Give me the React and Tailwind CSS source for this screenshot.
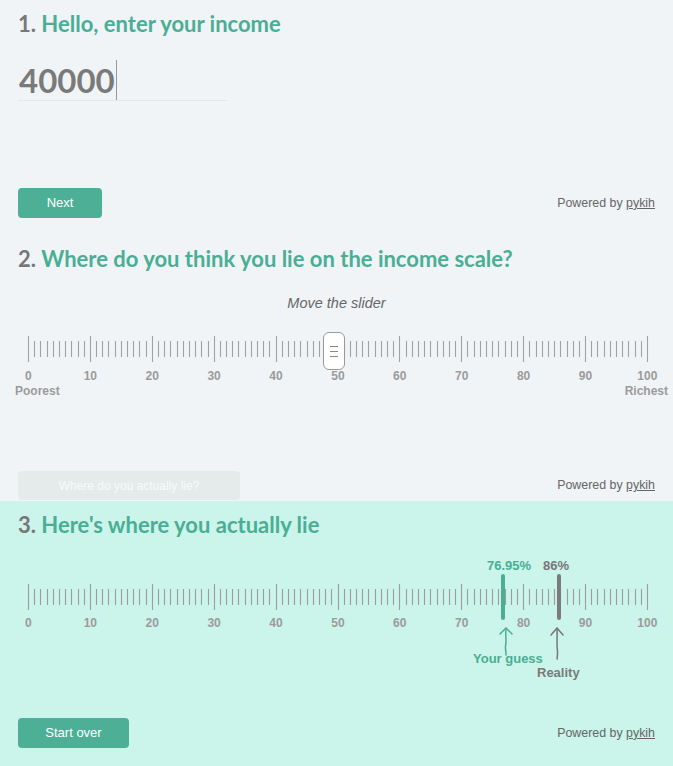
const STEP = 6.19;
const TICKS = Array.from({ length: 101 }, (_, i) => i);
const LABELS = Array.from({ length: 11 }, (_, i) => i * 10);
const SANS = { fontFamily: "'Liberation Sans', Arial, sans-serif" };

const Ticks = ({ color }) => (
  <svg width="622" height="27" className="block overflow-visible">
    {TICKS.map((i) => {
      const x = Math.round(i * STEP) + 0.5;
      const major = i % 10 === 0;
      return (
        <line
          key={i}
          x1={x}
          x2={x}
          y1={major ? 0 : 5}
          y2={major ? 26 : 21}
          stroke={color}
          strokeWidth="1.1"
        />
      );
    })}
  </svg>
);

const ScaleLabels = ({ className = "" }) => (
  <div className={`flex ml-[-30.5px] ${className}`} style={SANS}>
    {LABELS.map((v) => (
      <span
        key={v}
        className="w-[61.9px] shrink-0 text-center text-[12px] leading-[16px] font-bold text-[#9b9b9b]"
      >
        {v}
      </span>
    ))}
  </div>
);

const Heading = ({ n, children }) => (
  <h2 className="text-[22px] leading-[28px] font-bold text-[#4aae95]">
    <span className="text-[#777]">{n}.</span> {children}
  </h2>
);

const Powered = () => (
  <span className="text-[12.4px] text-[#666]" style={SANS}>
    Powered by <span className="underline">pykih</span>
  </span>
);

const Footer = ({ children, className = "" }) => (
  <div className={`flex items-center justify-between ${className}`} style={SANS}>
    {children}
    <Powered />
  </div>
);

export default function App() {
  return (
    <div
      className="bg-[#f0f4f7] w-[673px]"
      style={{ fontFamily: "Lato, 'Liberation Sans', sans-serif" }}
    >
      {/* step 1 */}
      <section className="px-[18px] pt-[10px]">
        <Heading n="1">Hello, enter your income</Heading>
        <div className="mt-[22px] w-[209px] h-[41px] border-b border-[#e3e8eb] flex items-center">
          <span className="text-[33px] leading-[40px] font-bold text-[#7a7a7a] pl-[1px]">
            40000
          </span>
          <span className="w-[1px] h-[40px] bg-[#999] ml-[1px]" />
        </div>
        <Footer className="mt-[87px]">
          <button className="w-[84px] h-[30px] rounded-[4px] bg-[#4caf96] text-white text-[13px]">
            Next
          </button>
        </Footer>
      </section>

      {/* step 2 */}
      <section className="px-[18px]">
        <div className="mt-[27px]">
          <Heading n="2">Where do you think you lie on the income scale?</Heading>
        </div>
        <p
          className="mt-[20px] text-center text-[14.5px] leading-[20px] italic text-[#666]"
          style={SANS}
        >
          Move the slider
        </p>
        <div className="relative ml-[10px] mt-[23px] w-[619px]">
          <Ticks color="#a2a2a2" />
          <ScaleLabels className="mt-[5px]" />
          <div
            className="flex justify-between ml-[-13px] mr-[-21px] mt-[-1px] text-[12px] leading-[16px] font-bold text-[#9b9b9b]"
            style={SANS}
          >
            <span>Poorest</span>
            <span>Richest</span>
          </div>
          <div className="absolute left-[295px] top-[-4px] w-[22px] h-[38px] rounded-[6px] border border-[#9a9a9a] bg-white flex flex-col items-center justify-center gap-[4px]">
            <span className="w-[8px] h-[1px] bg-[#888]" />
            <span className="w-[8px] h-[1px] bg-[#888]" />
            <span className="w-[8px] h-[1px] bg-[#888]" />
          </div>
        </div>
        <Footer className="mt-[72px] pb-[1px]">
          <button className="w-[222px] h-[29px] rounded-[4px] bg-[#e5eaeb] text-[#f7fafa] text-[12px]">
            Where do you actually lie?
          </button>
        </Footer>
      </section>

      {/* step 3 */}
      <section className="bg-[#cbf4ea] px-[18px] pt-[10px] pb-[18px]">
        <Heading n="3">Here's where you actually lie</Heading>
        <div className="relative ml-[10px] mt-[16px] w-[619px] h-[130px] pt-[29px]" style={SANS}>
          <Ticks color="#9d9d9d" />
          <ScaleLabels className="mt-[4px]" />
          <span className="absolute left-[459px] top-[3px] text-[13px] leading-[16px] font-bold text-[#4aae95]">
            76.95%
          </span>
          <span className="absolute left-[515px] top-[3px] text-[13px] leading-[16px] font-bold text-[#777]">
            86%
          </span>
          <div className="absolute left-[473px] top-[19px] w-[4px] h-[46px] rounded-[2px] bg-[#4aae95]" />
          <div className="absolute left-[529px] top-[19px] w-[4px] h-[46px] rounded-[2px] bg-[#7b7b7b]" />
          <svg className="absolute left-[466px] top-[72px]" width="20" height="30" viewBox="0 0 20 30">
            <path d="M6 7 L12 1 L18 7" fill="none" stroke="#4aae95" strokeWidth="1.5" strokeLinecap="round" />
            <path d="M12 2 C11 9 13 14 11.5 19 C11 23 12.5 25 12 28" fill="none" stroke="#4aae95" strokeWidth="1.5" strokeLinecap="round" />
          </svg>
          <svg className="absolute left-[519px] top-[72px]" width="20" height="34" viewBox="0 0 20 34">
            <path d="M4 8 L10 1 L16 8" fill="none" stroke="#777" strokeWidth="1.5" strokeLinecap="round" />
            <path d="M10 2 C10.5 10 9.5 18 10.5 24 C10.8 28 10 30 10.2 32" fill="none" stroke="#777" strokeWidth="1.5" strokeLinecap="round" />
          </svg>
          <span className="absolute left-[445px] top-[96px] text-[13px] leading-[16px] font-bold text-[#4aae95]">
            Your guess
          </span>
          <span className="absolute left-[509px] top-[110px] text-[13px] leading-[16px] font-bold text-[#7a7a7a]">
            Reality
          </span>
        </div>
        <Footer className="mt-[33px]">
          <button className="w-[111px] h-[30px] rounded-[4px] bg-[#4caf96] text-white text-[13px]">
            Start over
          </button>
        </Footer>
      </section>
    </div>
  );
}
